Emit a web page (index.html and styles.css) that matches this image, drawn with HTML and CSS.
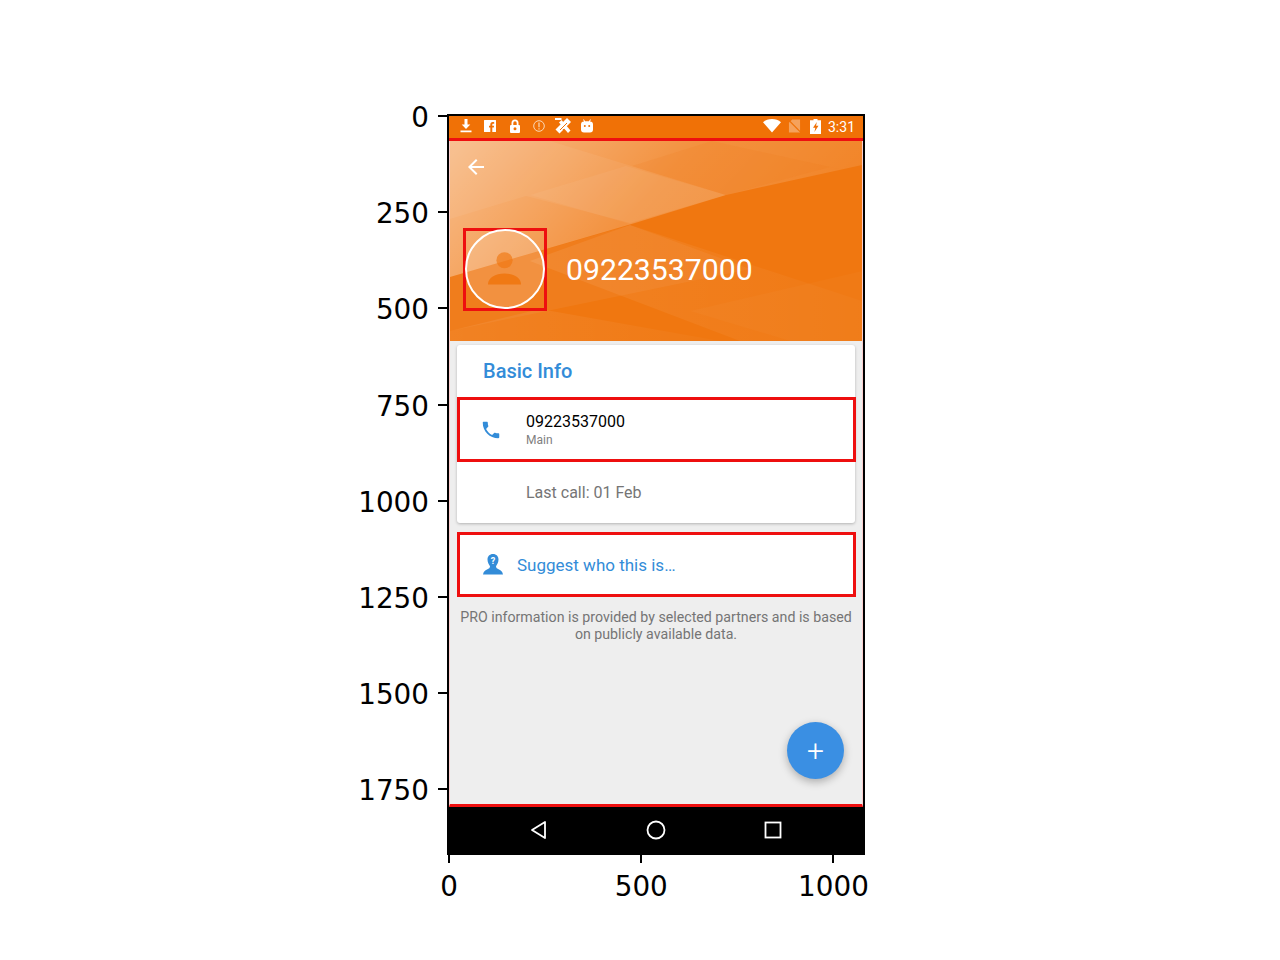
FILE: index.html
```html
<!DOCTYPE html>
<html lang="en">
<head>
  <meta charset="UTF-8" />
  <title>Caller profile</title>
  <link rel="stylesheet" href="styles.css">
</head>
<body>
  <div class="axes">
    <!-- axis ticks -->
    <div class="yaxis">
      <div class="ytick"><span>0</span><i></i></div>
      <div class="ytick"><span>250</span><i></i></div>
      <div class="ytick"><span>500</span><i></i></div>
      <div class="ytick"><span>750</span><i></i></div>
      <div class="ytick"><span>1000</span><i></i></div>
      <div class="ytick"><span>1250</span><i></i></div>
      <div class="ytick"><span>1500</span><i></i></div>
      <div class="ytick"><span>1750</span><i></i></div>
    </div>
    <div class="xaxis">
      <div class="xtick"><i></i><span>0</span></div>
      <div class="xtick"><i></i><span>500</span></div>
      <div class="xtick"><i></i><span>1000</span></div>
    </div>

    <!-- status bar -->
    <div class="status">
      <div class="status-left">
        <svg viewBox="0 0 14 14"><path fill="#fff" d="M5.500 0h3v5.500h2.800L7 10 2.700 5.500h2.800zM1.500 11.600h11V13.200h-11z"/></svg>
        <svg viewBox="0 0 14 14"><path fill="#fff" d="M1.500 1h11a.5.5 0 0 1 .5.500v11a.5.5 0 0 1-.5.500H9.300V8.600h1.500l.3-1.800H9.300V5.700c0-.5.200-.9.900-.9h1V3.200c-.3 0-.9-.1-1.500-.1-1.500 0-2.400.9-2.400 2.400v1.300H6v1.800h1.300V13H1.500a.5.5 0 0 1-.5-.5v-11a.5.5 0 0 1 .5-.5z"/></svg>
        <svg viewBox="0 0 14 14"><path fill="#fff" fill-rule="evenodd" d="M3.500 6V4a3.500 3.500 0 0 1 7 0v2h.5a1 1 0 0 1 1 1v6a1 1 0 0 1-1 1H3a1 1 0 0 1-1-1V7a1 1 0 0 1 1-1zm1.800 0h3.400V4a1.700 1.700 0 0 0-3.400 0zM7 8.300a1.500 1.500 0 1 0 0 3 1.500 1.500 0 0 0 0-3z"/></svg>
        <svg viewBox="0 0 14 14"><circle cx="7" cy="7" r="5.300" fill="none" stroke="#fbd9b8" stroke-width="1"/><path fill="#fbd9b8" d="M6.400 3.600h1.200v4.600H6.400zM6.400 9.200h1.200v1.200H6.400z"/></svg>
        <svg class="wide" viewBox="0 0 18 18"><path fill="#fff" d="M13 1l4 4-11.500 11.500-4-4z"/><path fill="#fff" d="M5 5.500L7.500 3l9 10.500L14 16z"/><path fill="#fff" d="M1 1h6.500v2H1z"/><path stroke="#f07106" stroke-width="1" fill="none" d="M6 13l7-7M9 12l3 4"/></svg>
        <svg viewBox="0 0 14 14"><path fill="#fff" d="M3.800.3l1.300 2h3.800l1.300-2 .7.4-1 1.800A3 3 0 0 1 13 5.500v5A3 3 0 0 1 10 13.500H4A3 3 0 0 1 1 10.500v-5a3 3 0 0 1 3.100-3l-1-1.800z"/><circle cx="4.800" cy="7" r="1" fill="#f07106"/><circle cx="9.200" cy="7" r="1" fill="#f07106"/></svg>
      </div>
      <div class="status-right">
        <svg class="wifi" viewBox="0 0 18 14"><path fill="#fff" d="M9 13.500L0 3.200C2.400 1.200 5.500 0 9 0s6.600 1.200 9 3.200z"/></svg>
        <svg class="sim" viewBox="0 0 14 14"><path fill="#fff" fill-opacity=".35" d="M4.500 0H13v14H1V3.500z"/><path stroke="#f07106" stroke-width="1.200" d="M0 0l14 14"/></svg>
        <svg class="batt" viewBox="0 0 11 15"><path fill="#fff" d="M3.500 0h4v1.200H11V15H0V1.200h3.500z"/><path fill="#f07106" d="M6.800 3L3 8.700h2.300L4.400 13 8.500 6.800H6.100z"/></svg>
        <span class="time">3:31</span>
      </div>
    </div>

    <div class="screen">
      <header class="profile">
        <svg class="facets" viewBox="0 0 412 200" preserveAspectRatio="none">
          <defs>
            <linearGradient id="sheen" x1="0" y1="0" x2="1" y2="0.3">
              <stop offset="0" stop-color="#fff" stop-opacity=".52"/>
              <stop offset=".55" stop-color="#fff" stop-opacity=".2"/>
              <stop offset="1" stop-color="#fff" stop-opacity=".1"/>
            </linearGradient>
            <linearGradient id="sheen2" x1="0" y1="0" x2="1" y2="0">
              <stop offset="0" stop-color="#fff" stop-opacity=".08"/>
              <stop offset="1" stop-color="#fff" stop-opacity=".02"/>
            </linearGradient>
          </defs>
          <polygon fill="url(#sheen)" points="0,0 412,0 412,24 276,54 185,82 0,136"/>
          <polygon fill="#fff" fill-opacity=".06" points="0,0 100,0 276,54 180,82 76,55 0,78"/>
          <polygon fill="#fff" fill-opacity=".05" points="80,54 176,25 276,54 180,83"/>
          <polygon fill="#f07710" fill-opacity=".12" points="182,25 262,0 412,33 380,26 276,54"/>
          <polygon fill="#fff" fill-opacity=".05" points="0,136 180,84 300,128 0,190"/>
          <polygon fill="url(#sheen2)" points="0,190 90,168 270,200 0,200"/>
          <polygon fill="url(#sheen2)" points="180,84 412,160 412,200 290,200 80,120"/>
          <polygon fill="#fff" fill-opacity=".025" points="240,170 412,130 412,200 340,200"/>
        </svg>
        <div class="toolbar">
          <svg class="back" viewBox="0 0 24 24"><path fill="#fff" d="M20 11H7.830l5.590-5.590L12 4l-8 8 8 8 1.410-1.410L7.830 13H20v-2z"/></svg>
        </div>
        <div class="identity">
          <div class="avatar-box">
            <div class="avatar">
              <svg viewBox="0 0 78 78"><circle cx="38.500" cy="30" r="8.300" fill="#f07710" fill-opacity=".65"/><path fill="#f07710" fill-opacity=".9" d="M21.500 55c0-7 7.500-11.300 17-11.300S55.500 48 55.500 55z"/></svg>
            </div>
          </div>
          <h1>09223537000</h1>
        </div>
      </header>

      <main class="content">
        <section class="card">
          <h2>Basic Info</h2>
          <div class="row outlined">
            <svg class="call" viewBox="0 0 24 24"><path fill="#338cd8" d="M6.620 10.790c1.440 2.830 3.760 5.140 6.590 6.590l2.200-2.200c.27-.27.670-.36 1.020-.24 1.120.37 2.330.57 3.570.57.550 0 1 .45 1 1V20c0 .55-.45 1-1 1-9.390 0-17-7.610-17-17 0-.55.45-1 1-1h3.500c.55 0 1 .45 1 1 0 1.250.2 2.450.57 3.570.11.350.03.740-.25 1.020l-2.200 2.200z"/></svg>
            <div class="row-text">
              <div class="number">09223537000</div>
              <div class="kind">Main</div>
            </div>
          </div>
          <div class="last-call">Last call: 01 Feb</div>
        </section>

        <a class="suggest outlined">
          <svg viewBox="0 0 20 21"><path fill="#338cd8" d="M10 0c3.400 0 5.500 2.400 5.500 5.600 0 2.800-1.300 5-2.500 6.700 0 1.500 1 2.400 3 3.300 2 .9 3.400 2.200 4 4.900H0c.6-2.700 2-4 4-4.900 2-.9 3-1.800 3-3.300C5.800 10.600 4.500 8.400 4.500 5.600 4.500 2.400 6.600 0 10 0z"/><text x="10" y="9.500" text-anchor="middle" class="q">?</text></svg>
          <span>Suggest who this is…</span>
        </a>

        <p class="note">PRO information is provided by selected partners and is based on publicly available data.</p>

        <button class="fab">+</button>
      </main>
    </div>

    <nav class="navbar">
      <svg viewBox="0 0 20 20"><path fill="none" stroke="#fff" stroke-width="1.800" stroke-linejoin="round" d="M16 2v16L3 10z"/></svg>
      <svg viewBox="0 0 20 20"><circle cx="10" cy="10" r="8.500" fill="none" stroke="#fff" stroke-width="1.800"/></svg>
      <svg viewBox="0 0 20 20"><rect x="2.500" y="2.500" width="15" height="15" fill="none" stroke="#fff" stroke-width="1.800"/></svg>
    </nav>
  </div>
</body>
</html>
```

FILE: styles.css
```css
html, body {
  margin: 0;
  height: 100%;
  background: #fff;
}

body {
  font-family: Roboto, "Liberation Sans", sans-serif;
  color: #111;
  overflow: hidden;
}

/* plot frame */
.axes {
  position: relative;
  box-sizing: border-box;
  width: 418px;
  height: 741px;
  margin: 114px 0 0 447px;
  border: 2px solid #000;
  display: flex;
  flex-direction: column;
}

.yaxis {
  position: absolute;
  right: 100%;
  top: -1px;
  margin-right: 2px;
  font: 27.800px "DejaVu Sans", sans-serif;
  color: #000;
}

.ytick {
  display: flex;
  justify-content: flex-end;
  align-items: flex-start;
  gap: 9px;
  height: 96.200px;
}

.ytick span {
  line-height: 5px;
}

.ytick i {
  width: 9px;
  height: 2px;
  background: #000;
}

.xaxis {
  position: absolute;
  top: 100%;
  left: -96px;
  margin-top: 2px;
  display: flex;
  font: 27.800px "DejaVu Sans", sans-serif;
  color: #000;
}

.xtick {
  width: 192.200px;
  display: flex;
  flex-direction: column;
  align-items: center;
}

.xtick i {
  width: 2px;
  height: 8px;
  background: #000;
}

.xtick span {
  margin-top: 7px;
  line-height: 34px;
}

/* status bar */
.status {
  flex: none;
  box-sizing: border-box;
  height: 25px;
  background: #f07106;
  border-bottom: 3px solid #ee0f0f;
  display: flex;
  justify-content: space-between;
  align-items: center;
  padding: 0 8px 2px 10px;
  color: #fff;
}

.status svg {
  width: 14px;
  height: 14px;
  display: block;
}

.status-left {
  display: flex;
  align-items: center;
  gap: 10.250px;
}

.status-left .wide {
  width: 18px;
  height: 18px;
  margin: 0 -2px;
}

.status-right {
  display: flex;
  align-items: center;
}

.status-right .wifi {
  width: 18px;
  height: 14px;
}

.status-right .sim {
  width: 13px;
  margin-left: 7px;
}

.status-right .batt {
  width: 11px;
  height: 15px;
  margin-left: 9px;
}

.time {
  font-size: 14px;
  margin-left: 7px;
  position: relative;
  top: 1px;
}

/* page under the status bar */
.screen {
  flex: 1;
  display: flex;
  flex-direction: column;
  border-left: 1px solid rgba(238, 15, 15, 0.2);
  border-right: 1px solid rgba(238, 15, 15, 0.2);
  border-bottom: 3px solid #ee0f0f;
}

.profile {
  position: relative;
  flex: none;
  height: 200px;
  background: #f07710;
  overflow: hidden;
}

.facets {
  position: absolute;
  inset: 0;
  width: 100%;
  height: 100%;
}

.toolbar {
  position: relative;
  box-sizing: border-box;
  height: 87px;
  padding: 14px 0 0 14px;
}

.back {
  display: block;
  width: 24px;
  height: 24px;
}

.identity {
  position: relative;
  display: flex;
  align-items: center;
  gap: 19px;
  padding-left: 13px;
}

.avatar-box {
  box-sizing: border-box;
  width: 84px;
  height: 83px;
  border: 3px solid #ee0f0f;
}

.avatar {
  box-sizing: border-box;
  width: 80px;
  height: 80px;
  margin: -2px 0 0 -1px;
  border: 2px solid #fff;
  border-radius: 50%;
  background: rgba(255, 255, 255, 0.16);
}

.avatar svg {
  display: block;
  width: 76px;
  height: 76px;
}

h1 {
  margin: 0;
  font-size: 30.200px;
  font-weight: 400;
  color: #fff;
}

.content {
  position: relative;
  flex: 1;
  background: #eeeeee;
  padding: 4px 0 0 7px;
}

.card {
  width: 398px;
  height: 178px;
  background: #fff;
  border-radius: 3px;
  box-shadow: 0 1px 3px rgba(0, 0, 0, 0.25);
}

h2 {
  margin: 0;
  height: 52px;
  box-sizing: border-box;
  padding: 14px 0 0 26px;
  font-size: 20px;
  line-height: 24px;
  font-weight: 500;
  color: #338cd8;
}

.outlined {
  box-sizing: border-box;
  width: 399px;
  background: #fff;
  border: 3px solid #ee0f0f;
  position: relative;
}

.row {
  height: 65px;
  display: flex;
  align-items: center;
  padding-left: 20px;
  gap: 24px;
}

.call {
  width: 22px;
  height: 22px;
  flex: none;
}

.number {
  font-size: 16px;
  line-height: 20px;
  color: #000;
}

.kind {
  font-size: 12px;
  line-height: 16px;
  color: #808080;
}

.last-call {
  padding: 21px 0 0 69px;
  font-size: 16px;
  line-height: 20px;
  color: #757575;
}

.suggest {
  display: flex;
  align-items: center;
  gap: 14px;
  height: 65px;
  margin-top: 9px;
  padding-left: 23px;
  font-size: 17px;
  color: #338cd8;
}

.suggest svg {
  width: 20px;
  height: 21px;
  flex: none;
}

.q {
  font: 700 9px Roboto, sans-serif;
  fill: #fff;
}

.note {
  margin: 12px 0 0 -7px;
  padding: 0 4px;
  font-size: 14.200px;
  line-height: 16.500px;
  text-align: center;
  color: #757575;
}

.fab {
  position: absolute;
  right: 18px;
  bottom: 25px;
  width: 57px;
  height: 57px;
  border: none;
  border-radius: 50%;
  background: #3a8fe3;
  color: #fff;
  font: 300 30px/57px Roboto, sans-serif;
  padding: 0;
  box-shadow: 0 3px 8px rgba(0, 0, 0, 0.28);
}

.navbar {
  flex: none;
  height: 46px;
  background: #000;
  display: flex;
  justify-content: center;
  align-items: center;
  gap: 97px;
}

.navbar svg {
  width: 20px;
  height: 20px;
}
```
